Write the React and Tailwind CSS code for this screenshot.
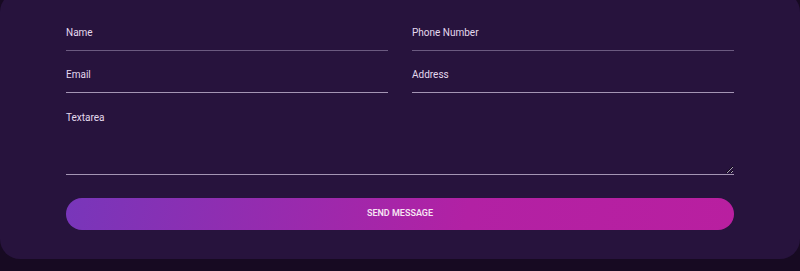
import React from "react";

const Field = ({ label, lineClass }) => (
  <label className="flex flex-col">
    <span className="h-[14px] leading-[14px] text-[10px] text-[#e4d9ee]">{label}</span>
    <input
      type="text"
      className={`h-[11px] bg-transparent outline-none text-[10px] text-white border-b ${lineClass}`}
    />
  </label>
);

const App = () => {
  return (
    <div className="flex min-h-[271px] w-full flex-col bg-[#170a22] font-['Roboto',sans-serif]">
      <div className="-mt-2 h-[267px] rounded-[20px] bg-[#27133d] px-[66px] pt-[34px]">
        <form className="flex flex-col" onSubmit={(e) => e.preventDefault()}>
          <div className="grid grid-cols-2 gap-x-6 gap-y-[17px]">
            <Field label="Name" lineClass="border-[#6b5a80]" />
            <Field label="Phone Number" lineClass="border-[#6b5a80]" />
            <Field label="Email" lineClass="border-[#a495b4]" />
            <Field label="Address" lineClass="border-[#a495b4]" />
          </div>
          <label className="mt-[18px] flex flex-col">
            <span className="h-[14px] leading-[14px] text-[10px] text-[#e4d9ee]">Textarea</span>
            <textarea className="h-[50px] bg-transparent outline-none text-[10px] text-white border-b border-[#a495b4]" />
          </label>
          <button
            type="submit"
            className="mt-[23px] h-[32px] rounded-full bg-linear-[100deg] from-[#7836ba] via-[#b221a4] via-60% to-[#b91fa0] text-[9px] font-semibold uppercase text-[#f6e3f3]"
          >
            Send Message
          </button>
        </form>
      </div>
    </div>
  );
};

export default App;
